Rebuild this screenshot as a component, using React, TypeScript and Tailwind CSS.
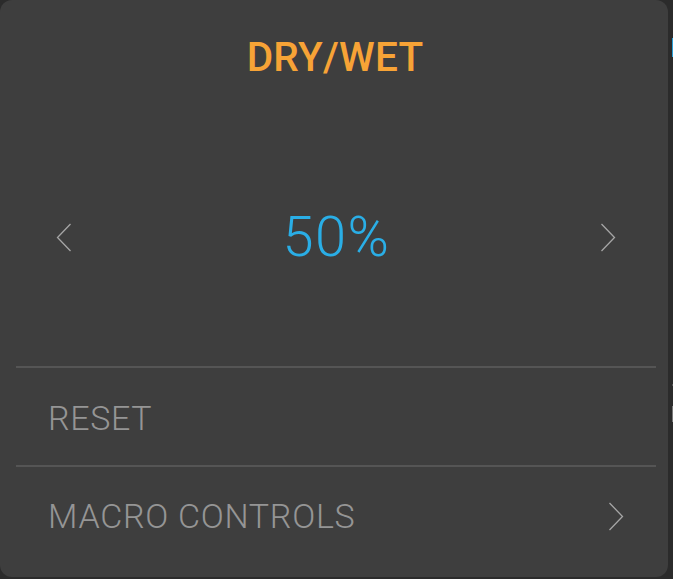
import React from "react"

const Chevron = ({ dir, className }: { dir: "left" | "right"; className?: string }) => (
  <svg width="16" height="29" viewBox="0 0 16 29" className={className} fill="none">
    <polyline
      points={dir === "left" ? "14.5,1 1.5,14.5 14.5,28" : "1.5,1 14.5,14.5 1.5,28"}
      stroke="#a6a6a6"
      strokeWidth="1.3"
    />
  </svg>
)

const Divider = () => <div className="ml-4 mr-3 h-[2px] bg-[#555555]" />

export default function App() {
  return (
    <div
      className="w-[673px] h-[579px] bg-[#2b2b2b] flex overflow-hidden"
      style={{ fontFamily: "Roboto, 'Liberation Sans', sans-serif" }}
    >
      <div className="w-[668px] h-[577px] bg-[#3e3e3e] rounded-[12px] flex flex-col">
        <div className="h-[114px] flex items-start justify-center pt-[31px]">
          <h1 className="text-[40.5px] leading-[52px] font-medium text-[#f7a336] tracking-[0.2px] pl-[2px]">DRY/WET</h1>
        </div>

        <div className="flex-1 flex items-center justify-between pl-[56px] pr-[52px] pb-[6px]">
          <Chevron dir="left" />
          <span className="text-[56px] leading-none font-light text-[#2aaee6] tracking-[1.5px] pl-[1px]">50%</span>
          <Chevron dir="right" />
        </div>

        <Divider />
        <div className="h-[97px] flex items-center px-12 pt-[4px]">
          <span className="text-[34px] font-light text-[#959595] tracking-[0.6px]">RESET</span>
        </div>
        <Divider />
        <div className="h-[110px] flex items-center justify-between pl-12 pr-[44px] pb-[12px]">
          <span className="text-[34px] font-light text-[#959595] tracking-[0.7px]">MACRO CONTROLS</span>
          <Chevron dir="right" />
        </div>
      </div>

      <div className="w-[5px] flex flex-col">
        <div className="h-[38px]" />
        <div className="h-[19px] ml-[4px] w-[1px] bg-[#2a9fd6]" />
        <div className="h-[327px]" />
        <div className="h-[2px] ml-[4px] w-[1px] bg-[#555555]" />
        <div className="h-[20px]" />
        <div className="h-[16px] ml-[4px] w-[1px] bg-[#777777]" />
      </div>
    </div>
  )
}
